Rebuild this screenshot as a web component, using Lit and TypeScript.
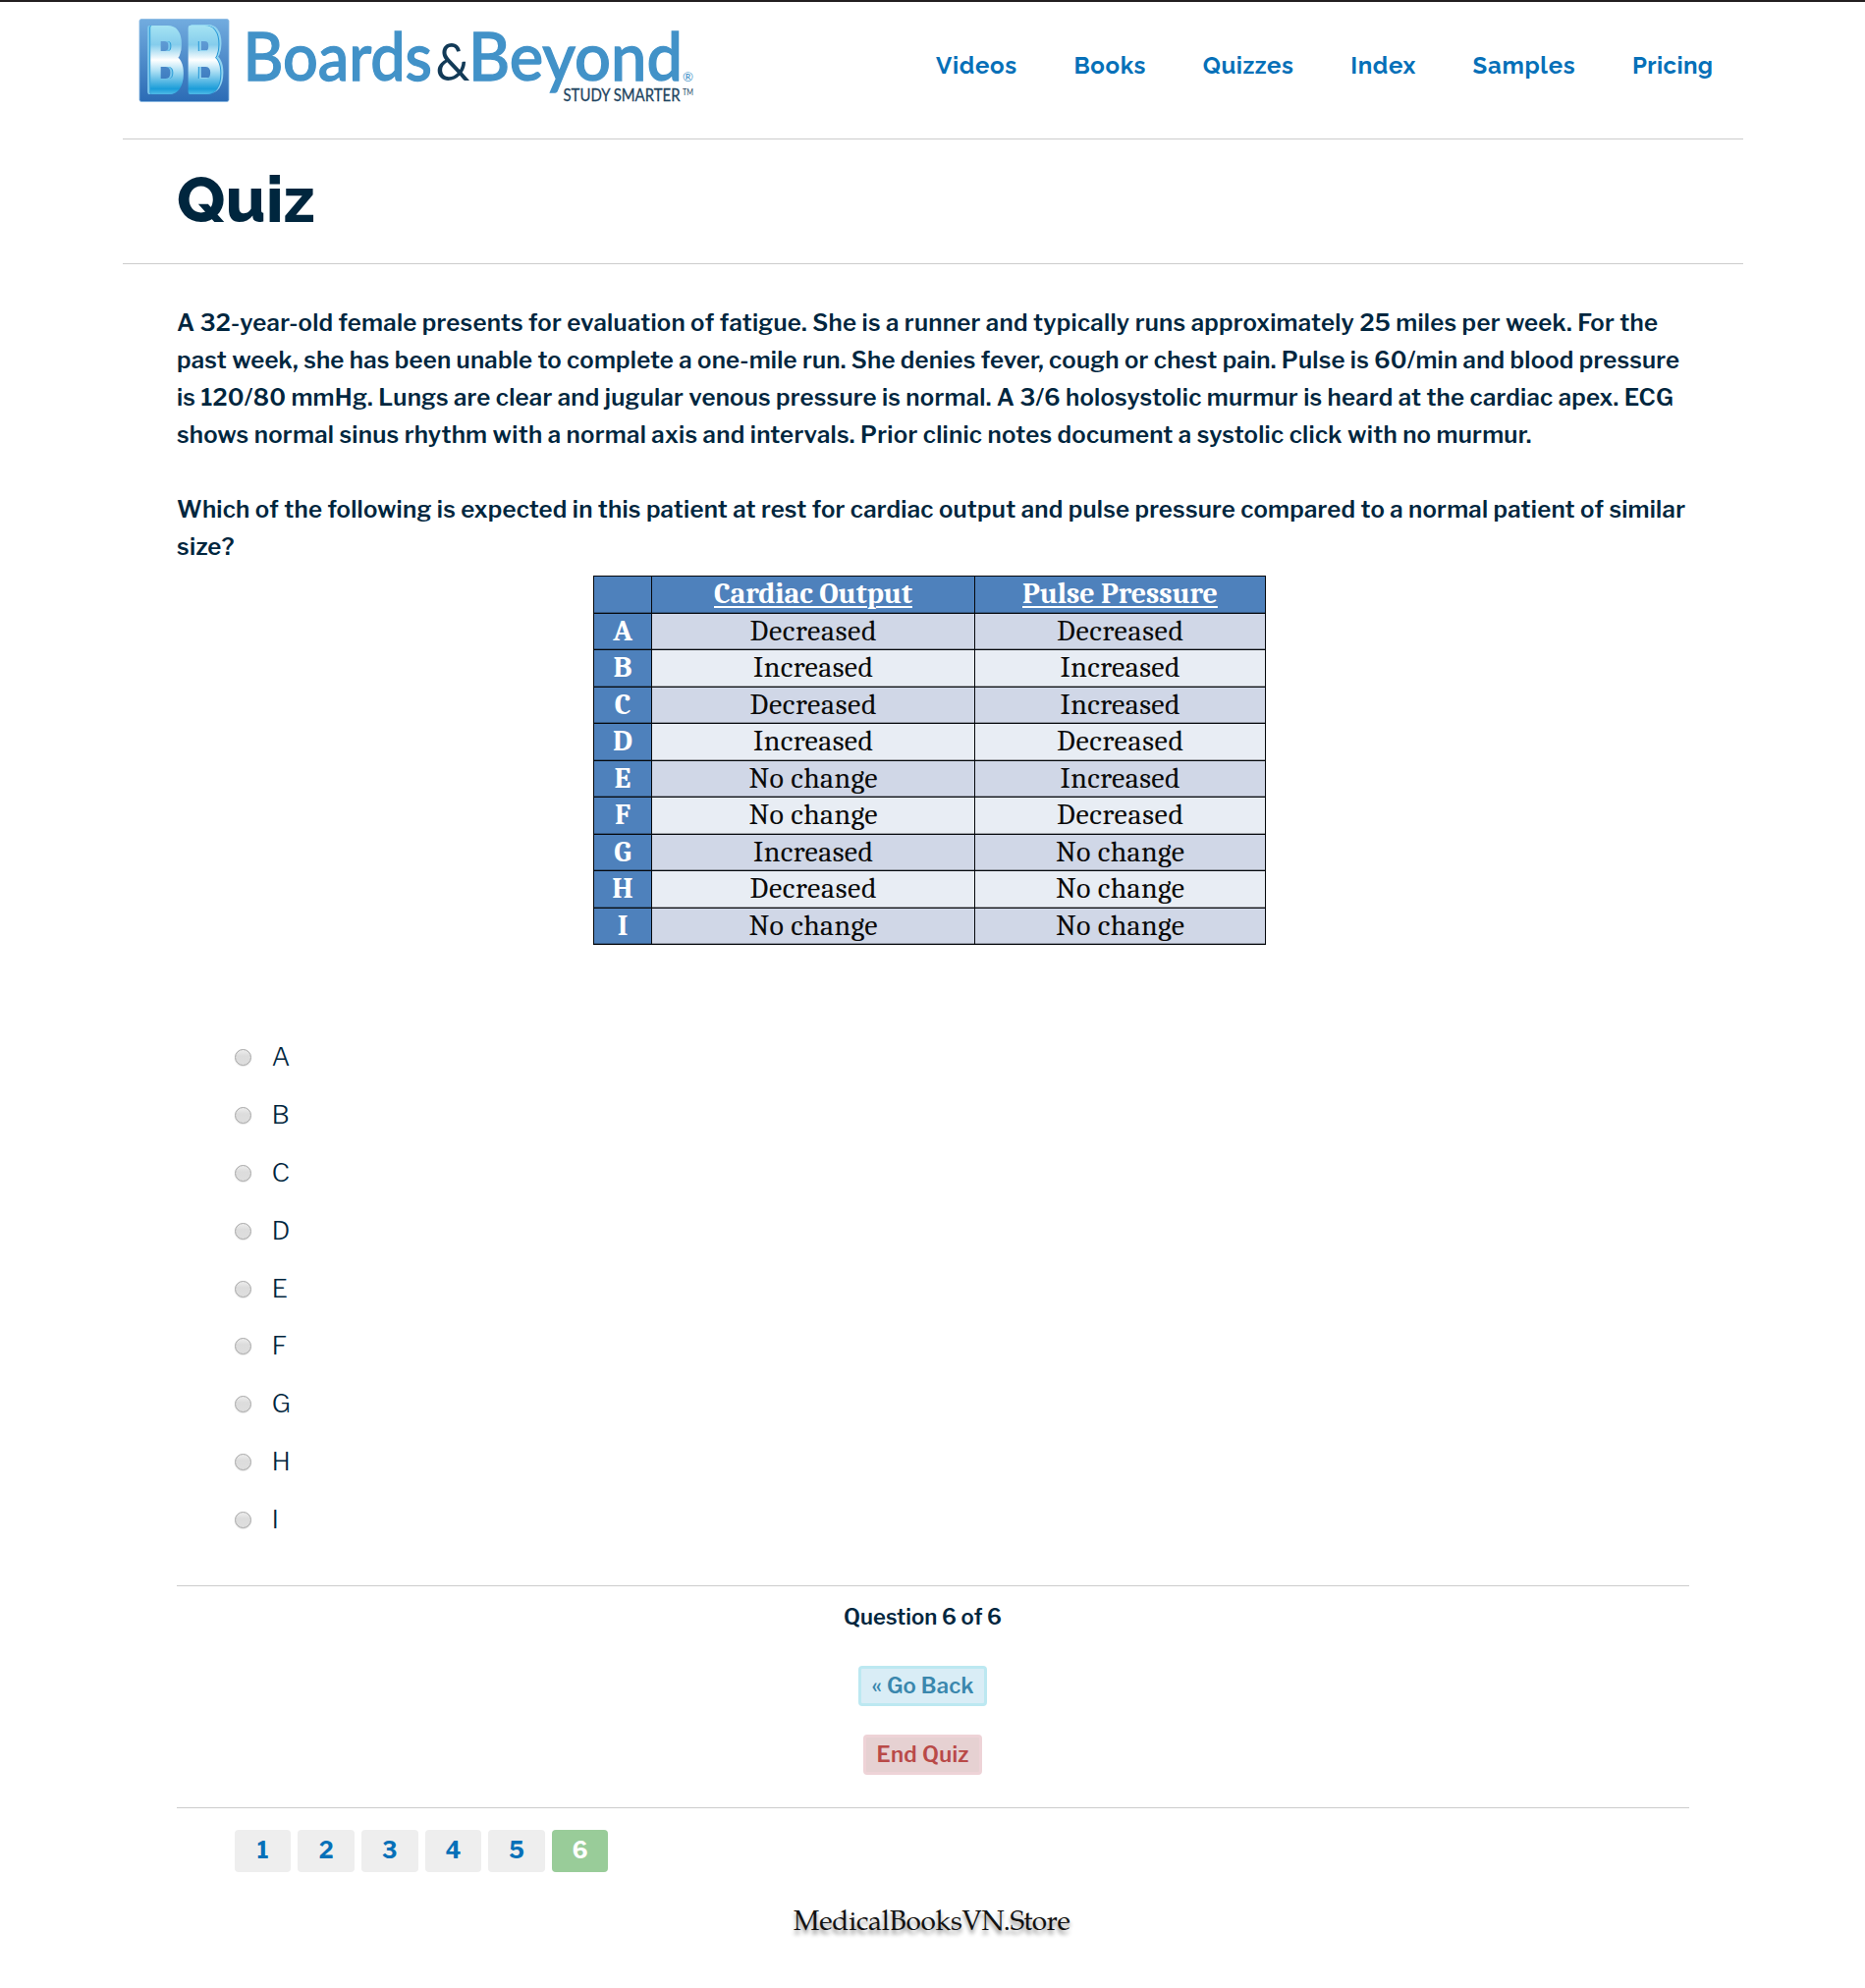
import { LitElement, html, css, svg } from "lit";
import { customElement, property } from "lit/decorators.js";

/** Single line of text whose tracking is adjusted so that it spans `width` pixels. */
@customElement("tracked-text")
class TrackedText extends LitElement {
  @property() text = "";
  @property({ type: Number }) width = 0;

  static styles = css`
    :host { display: inline-block; white-space: pre; }
    .run { display: inline-block; text-decoration: inherit; text-underline-offset: inherit; }
  `;

  updated() {
    const run = this.renderRoot.querySelector(".run") as HTMLElement;
    run.style.letterSpacing = "0px";
    const natural = run.getBoundingClientRect().width;
    const gaps = Math.max(1, this.text.length - 1);
    const spacing = (this.width - natural) / gaps;
    run.style.letterSpacing = `${spacing}px`;
    run.style.marginRight = `${-spacing}px`;
  }

  render() {
    return html`<span class="run">${this.text}</span>`;
  }
}

@customElement("brand-logo")
class BrandLogo extends LitElement {
  static styles = css`
    :host { display: block; }
    svg { display: block; }
    text { font-family: Lato, "Open Sans", sans-serif; }
    .word { font-size: 67.5px; font-weight: 500; fill: #4292c8; stroke: #4292c8; stroke-width: 1.3; }
    .amp { font-size: 53px; fill: #123a57; }
    .tag { font-size: 17.4px; fill: #1d4460; stroke: #1d4460; stroke-width: 0.3; }
    .tm { font-size: 8.5px; fill: #1d4460; }
    .reg { font-size: 14px; fill: #4292c8; }
    .mono {
      font-family: "Liberation Sans", sans-serif;
      font-weight: 700;
      font-size: 92px;
      fill: url(#face);
      stroke: url(#face);
      stroke-width: 6;
      stroke-linejoin: round;
    }
    .left { filter: drop-shadow(-1px 0 0 #2f9fd8) drop-shadow(-2px 0.5px 0 #7cc8ec); }
    .right { filter: drop-shadow(1.5px 0 0 #2396d6) drop-shadow(2px -0.5px 0 #8fd3f0); }
  `;

  render() {
    return html`
      <svg width="580" height="110" viewBox="135 2 580 110">
        <defs>
          <linearGradient id="tile" x1="0" y1="0" x2="0" y2="1">
            <stop offset="0" stop-color="#72acdf" />
            <stop offset="1" stop-color="#2b6bb5" />
          </linearGradient>
          <linearGradient id="face" gradientUnits="userSpaceOnUse" x1="0" y1="26" x2="0" y2="96">
            <stop offset="0" stop-color="#a5e3f3" />
            <stop offset="0.28" stop-color="#85cdec" />
            <stop offset="0.5" stop-color="#ffffff" />
            <stop offset="0.65" stop-color="#b3e2f5" />
            <stop offset="0.92" stop-color="#1b9dd9" />
            <stop offset="1" stop-color="#4fb9e6" />
          </linearGradient>
        </defs>
        <rect x="142" y="19.5" width="91" height="84" rx="2" fill="url(#tile)" stroke="#86b7e2" stroke-width="0.8" />
        <text class="mono left" x="151.5" y="92.5" textLength="36" lengthAdjust="spacingAndGlyphs">B</text>
        <text class="mono right" x="190" y="93" textLength="35" lengthAdjust="spacingAndGlyphs">B</text>
        <text class="word" x="247.5" y="81.6" textLength="192.5" lengthAdjust="spacingAndGlyphs">Boards</text>
        <text class="amp" x="443.5" y="81.8" textLength="35" lengthAdjust="spacingAndGlyphs">&amp;</text>
        <text class="word" x="477" y="81.6" textLength="218" lengthAdjust="spacingAndGlyphs">Beyond</text>
        <text class="reg" x="695" y="83" textLength="11" lengthAdjust="spacingAndGlyphs">®</text>
        <text class="tag" x="573.5" y="103" textLength="119" lengthAdjust="spacingAndGlyphs">STUDY SMARTER</text>
        <text class="tm" x="695" y="96.7" textLength="11" lengthAdjust="spacingAndGlyphs">TM</text>
      </svg>
    `;
  }
}

const NAV: [string, number][] = [
  ["Videos", 82], ["Books", 73], ["Quizzes", 92], ["Index", 66], ["Samples", 104], ["Pricing", 82],
];

const CASE_LINES: [string, number][] = [
  ["A 32-year-old female presents for evaluation of fatigue. She is a runner and typically runs approximately 25 miles per week. For the", 1508],
  ["past week, she has been unable to complete a one-mile run. She denies fever, cough or chest pain. Pulse is 60/min and blood pressure", 1530],
  ["is 120/80 mmHg. Lungs are clear and jugular venous pressure is normal. A 3/6 holosystolic murmur is heard at the cardiac apex. ECG", 1524],
  ["shows normal sinus rhythm with a normal axis and intervals. Prior clinic notes document a systolic click with no murmur.", 1379.5],
];

const PROMPT_LINES: [string, number][] = [
  ["Which of the following is expected in this patient at rest for cardiac output and pulse pressure compared to a normal patient of similar", 1536],
  ["size?", 58.5],
];

const WIDTHS: Record<string, number> = { Decreased: 129, Increased: 122, "No change": 131 };

const D = "Decreased";
const I = "Increased";
const N = "No change";
const ROWS: [string, string, string][] = [
  ["A", D, D], ["B", I, I], ["C", D, I], ["D", I, D], ["E", N, I],
  ["F", N, D], ["G", I, N], ["H", D, N], ["I", N, N],
];

@customElement("app-root")
class AppRoot extends LitElement {
  static styles = css`
    :host {
      display: block;
      box-sizing: border-box;
      height: 2024px;
      border-top: 2px solid #231f20;
      background: #fff;
      color: #00263e;
      font-family: "Libre Franklin", Inter, sans-serif;
    }
    * { box-sizing: border-box; }
    .page { width: 1650px; margin-left: 125px; }
    .header {
      display: flex;
      align-items: flex-start;
      justify-content: space-between;
      height: 140px;
      padding: 0 31px 0 10px;
      border-bottom: 1px solid #ccc;
    }
    .nav { display: flex; gap: 58.4px; margin-top: 45px; }
    .nav a {
      color: #0670b8;
      font: 700 24px/40px Raleway, Lato, sans-serif;
      text-decoration: none;
    }
    .title { height: 127px; padding-left: 55px; border-bottom: 1px solid #ccc; }
    h1 { margin: 0; font: 800 65px/122px Raleway, Lato, sans-serif; }
    .content { padding: 41px 55px 0; }
    .copy { font-size: 24px; line-height: 38px; font-weight: 600; margin: 0 0 38px; }
    .copy.prompt { margin-bottom: 10px; }
    .line { display: block; height: 38px; }
    .table {
      display: grid;
      grid-template-columns: 58px 328px 295px;
      grid-template-rows: repeat(10, 36.56px);
      gap: 1px;
      padding: 1px;
      width: 685px;
      margin-left: 424px;
      background: #05080c;
      color: #0a0a0a;
      font: 30px/36px Caladea, Cambria, "Liberation Serif", serif;
    }
    .cell {
      display: flex;
      justify-content: center;
      background: #d0d7e7;
      box-shadow: inset 0 -1px #0000004d;
    }
    .cell.even { background: #e8edf4; }
    .cell.head { background: #4e81bc; color: #fff; font-weight: 700; }
    .head tracked-text { text-decoration: underline 2px; text-underline-offset: 3px; }
    .options { display: grid; grid-auto-rows: 58.87px; margin: 84.8px 0 0 59px; padding: 0; list-style: none; }
    .option { display: flex; align-items: center; gap: 21px; font-size: 26.5px; font-weight: 300; line-height: 50px; }
    .radio {
      width: 17px;
      height: 17px;
      border: 1px solid #a5a5a5;
      border-radius: 50%;
      background: linear-gradient(#ededed, #dcdcdc 40%, #dedede);
      box-shadow: 0 1px 1px #0000001a;
    }
    .option span { margin: -1px 0 0 -0.5px; }
    .progress {
      display: flex;
      flex-direction: column;
      align-items: center;
      height: 227px;
      margin-top: 36.6px;
      padding: 16px 21px 0 0;
      border: solid #ccc;
      border-width: 1px 0;
    }
    .count { font-size: 22px; line-height: 30px; font-weight: 600; margin-bottom: 35px; }
    .button {
      display: flex;
      justify-content: center;
      height: 41px;
      border: 3px solid;
      border-radius: 4px;
      padding: 0;
      font: 600 22px/34px "Libre Franklin", Inter, sans-serif;
    }
    .back { width: 131px; border-color: #bce8f1; background: #d9edf6; color: #3a87ad; margin-bottom: 29px; }
    .end { width: 121px; border-color: #eed3d7; background: #e6d1d2; color: #b94a48; }
    .pager { display: flex; gap: 7px; margin: 22px 0 0 58.8px; }
    .pager a {
      width: 57.6px;
      height: 43px;
      border-radius: 4px;
      background: #eee;
      color: #0670b8;
      font: 700 23px/42px "Libre Franklin", Lato, sans-serif;
      text-align: center;
    }
    .pager a.current { background: #99cc99; color: #fff; }
    .footer {
      display: flex;
      justify-content: center;
      margin: 35px 2px 0 0;
      color: #111;
      font: 28px/36px "Palatino Linotype", "TeX Gyre Pagella", P052, "Liberation Serif", serif;
      text-shadow: 0 4px 4px rgba(0, 0, 0, 0.45);
    }
  `;

  private cell(text: string, even: boolean) {
    return html`<div class="cell ${even ? "even" : ""}">
      <tracked-text .text=${text} .width=${WIDTHS[text]}></tracked-text>
    </div>`;
  }

  private lines(lines: [string, number][]) {
    return lines.map(([t, w]) => html`<tracked-text class="line" .text=${t} .width=${w}></tracked-text>`);
  }

  render() {
    return html`
      <div class="page">
        <header class="header">
          <brand-logo></brand-logo>
          <nav class="nav">
            ${NAV.map(([t, w]) => html`<a><tracked-text .text=${t} .width=${w}></tracked-text></a>`)}
          </nav>
        </header>
        <section class="title">
          <h1><tracked-text .text=${"Quiz"} .width=${141}></tracked-text></h1>
        </section>
        <main class="content">
          <p class="copy">${this.lines(CASE_LINES)}</p>
          <p class="copy prompt">${this.lines(PROMPT_LINES)}</p>
          <div class="table">
            <div class="cell head"></div>
            <div class="cell head"><tracked-text .text=${"Cardiac Output"} .width=${202}></tracked-text></div>
            <div class="cell head"><tracked-text .text=${"Pulse Pressure"} .width=${199}></tracked-text></div>
            ${ROWS.map(
              ([key, output, pressure], i) => html`
                <div class="cell head">${key}</div>
                ${this.cell(output, i % 2 === 1)} ${this.cell(pressure, i % 2 === 1)}
              `
            )}
          </div>
          <ul class="options">
            ${ROWS.map(([key]) => html`<li class="option"><i class="radio"></i><span>${key}</span></li>`)}
          </ul>
          <section class="progress">
            <div class="count"><tracked-text .text=${"Question 6 of 6"} .width=${161}></tracked-text></div>
            <button class="button back"><tracked-text .text=${"« Go Back"} .width=${104}></tracked-text></button>
            <button class="button end"><tracked-text .text=${"End Quiz"} .width=${94}></tracked-text></button>
          </section>
          <nav class="pager">
            ${[1, 2, 3, 4, 5, 6].map((n) => html`<a class=${n === 6 ? "current" : ""}>${n}</a>`)}
          </nav>
          <footer class="footer"><tracked-text .text=${"MedicalBooksVN.Store"} .width=${282}></tracked-text></footer>
        </main>
      </div>
    `;
  }
}
